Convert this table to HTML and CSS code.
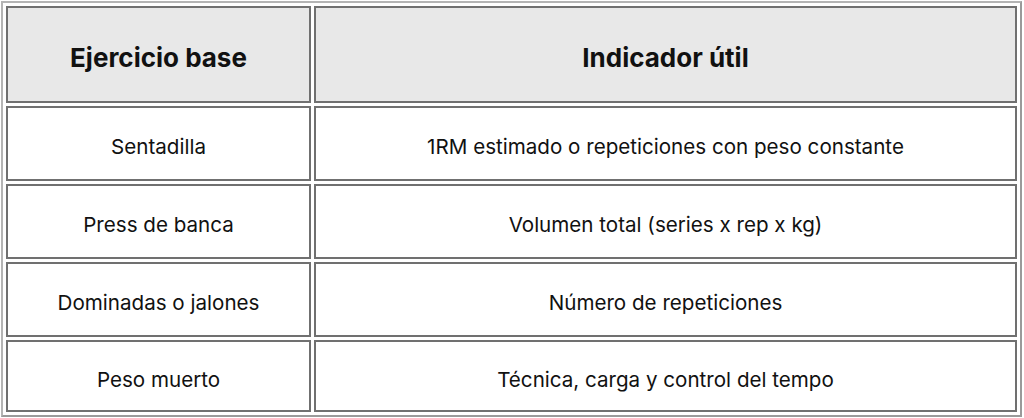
FILE: index.html
```html
<!DOCTYPE html>
<html lang="es">
<head>
<meta charset="utf-8">
<link rel="stylesheet" href="styles.css">
</head>
<body>
<table class="grid">
  <thead>
    <tr class="head-row">
      <th class="col-a">Ejercicio base</th>
      <th class="col-b">Indicador útil</th>
    </tr>
  </thead>
  <tbody>
    <tr class="row"><td>Sentadilla</td><td>1RM estimado o repeticiones con peso constante</td></tr>
    <tr class="row"><td>Press de banca</td><td>Volumen total (series x rep x kg)</td></tr>
    <tr class="row"><td>Dominadas o jalones</td><td>Número de repeticiones</td></tr>
    <tr class="row last"><td>Peso muerto</td><td>Técnica, carga y control del tempo</td></tr>
  </tbody>
</table>
</body>
</html>
```
FILE: styles.css
```css
html, body {
  margin: 0;
  padding: 0;
  background: #ffffff;
}
body {
  padding: 1px 0 0 1px;
  font-family: "Inter", "Liberation Sans", sans-serif;
  color: #111111;
}
.grid {
  width: 1021px;
  table-layout: fixed;
  border-collapse: separate;
  border-spacing: 3px;
  border: 2px solid #9a9a9a;
  border-top-color: #b4b4b4;
  border-left-color: #b4b4b4;
}
.grid th,
.grid td {
  border: 2px solid #707070;
  text-align: center;
  vertical-align: middle;
  padding: 0;
  box-sizing: border-box;
}
.col-a { width: 305px; }
.head-row th {
  height: 97px;
  background: #e8e8e8;
  font-weight: 700;
  font-size: 26px;
  padding-top: 6px;
}
.row td {
  height: 75px;
  font-size: 20.6px;
  font-weight: 400;
  padding-top: 6px;
}
.row.last td {
  height: 72px;
}
```
